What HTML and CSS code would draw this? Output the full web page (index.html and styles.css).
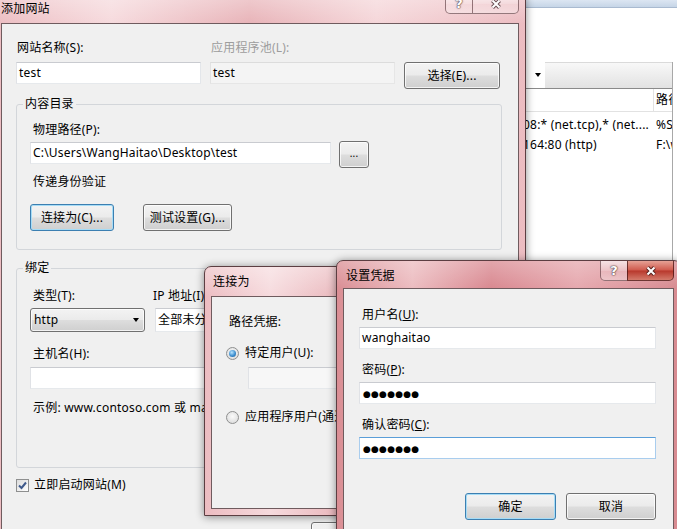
FILE: index.html
```html
<!DOCTYPE html>
<html lang="zh-CN">
<head>
<meta charset="utf-8">
<title>添加网站</title>
<link rel="stylesheet" href="styles.css">
</head>
<body>
<div class="desktop">

  <div class="bgwin">
    <div class="bg-top"></div>
    <div class="bg-pane">
      <div class="bg-toolbar">
        <div class="bg-combo"><span class="tri"></span></div>
        <div class="bg-tools"></div>
      </div>
      <div class="bg-head"><div class="c1"></div><div class="c2">路径</div></div>
      <div class="bg-rows">
        <div class="bg-row"><div class="c1">08:* (net.tcp),* (net....</div><div class="c2">%SystemDrive%\inetpub\wwwroot</div></div>
        <div class="bg-row"><div class="c1">164:80 (http)</div><div class="c2">F:\website</div></div>
      </div>
    </div>
  </div>

  <div class="win win-main inactive">
    <div class="titlebar">
      <span class="title">添加网站</span>
      <div class="caps">
        <span class="cap help">?</span>
        <span class="cap close"><svg width="12" height="10" viewBox="0 0 12 10"><path d="M2.5 1.5 L9.5 8.5 M9.5 1.5 L2.5 8.5" stroke="#6b5255" stroke-width="4"/><path d="M2.5 1.5 L9.5 8.5 M9.5 1.5 L2.5 8.5" stroke="#fff" stroke-width="2"/></svg></span>
      </div>
    </div>
    <div class="client main-client">
      <div class="site-grid">
        <span class="lbl">网站名称(S):</span>
        <span class="lbl disabled">应用程序池(L):</span>
        <span></span>
        <div class="tb">test</div>
        <div class="tb readonly">test</div>
        <button class="btn">选择(E)...</button>
      </div>

      <fieldset class="group g1">
        <legend>内容目录</legend>
        <div class="g1-body">
          <span class="lbl block">物理路径(P):</span>
          <div class="path-row">
            <div class="tb path">C:\Users\WangHaitao\Desktop\test</div>
            <button class="btn dots">...</button>
          </div>
          <span class="lbl block auth">传递身份验证</span>
          <div class="btn-row">
            <button class="btn default w84">连接为(C)...</button>
            <button class="btn w89">测试设置(G)...</button>
          </div>
        </div>
      </fieldset>

      <fieldset class="group g2">
        <legend>绑定</legend>
        <div class="g2-body">
          <div class="bind-grid">
            <span class="lbl">类型(T):</span>
            <span class="lbl ip">IP 地址(I):</span>
            <div class="select"><span>http</span><span class="tri"></span></div>
            <div class="tb ipbox">全部未分配</div>
          </div>
          <span class="lbl block host">主机名(H):</span>
          <div class="tb hostbox"></div>
          <span class="lbl block example">示例: www.contoso.com 或 marketing.contoso.com</span>
        </div>
      </fieldset>

      <div class="check-row">
        <span class="checkbox"><svg width="11" height="11" viewBox="0 0 11 11"><path d="M2 5.5 L4.5 8 L9 2.5" fill="none" stroke="#3f5a8c" stroke-width="2"/></svg></span>
        <span>立即启动网站(M)</span>
      </div>

      <div class="main-actions">
        <button class="btn w85">确定</button>
        <button class="btn w85">取消</button>
      </div>
    </div>
  </div>

  <div class="win win-conn inactive">
    <div class="titlebar">
      <span class="title">连接为</span>
    </div>
    <div class="client conn-client">
      <span class="lbl block">路径凭据:</span>
      <div class="radio-row first">
        <span class="radio checked"></span>
        <span>特定用户(U):</span>
      </div>
      <div class="tb userbox"></div>
      <div class="radio-row second">
        <span class="radio"></span>
        <span>应用程序用户(通过身份验证)(A)</span>
      </div>
    </div>
  </div>

  <div class="win win-cred active">
    <div class="titlebar">
      <span class="title">设置凭据</span>
      <div class="caps">
        <span class="cap help">?</span>
        <span class="cap close red"><svg width="12" height="10" viewBox="0 0 12 10"><path d="M2.5 1.5 L9.5 8.5 M9.5 1.5 L2.5 8.5" stroke="#5a2420" stroke-width="4"/><path d="M2.5 1.5 L9.5 8.5 M9.5 1.5 L2.5 8.5" stroke="#fff" stroke-width="2"/></svg></span>
      </div>
    </div>
    <div class="client cred-client">
      <span class="lbl block">用户名(<u>U</u>):</span>
      <div class="tb cred">wanghaitao</div>
      <span class="lbl block gap">密码(<u>P</u>):</span>
      <div class="tb cred"><span class="pw">●●●●●●●</span></div>
      <span class="lbl block gap">确认密码(<u>C</u>):</span>
      <div class="tb cred focus"><span class="pw">●●●●●●●</span></div>
      <div class="cred-actions">
        <button class="btn default w91">确定</button>
        <button class="btn w90">取消</button>
      </div>
    </div>
  </div>

</div>
</body>
</html>
```

FILE: styles.css
```css
* { box-sizing: border-box; margin: 0; padding: 0; }
html, body { width: 677px; height: 529px; overflow: hidden; }
body {
  font-family: "Noto Sans", "Noto Sans CJK SC", sans-serif;
  font-size: 12px;
  line-height: 16px;
  letter-spacing: 0.2px;
  color: #000;
  background: #fff;
}
.desktop { position: relative; width: 677px; height: 529px; overflow: hidden; }

/* background IIS window */
.bgwin { position: absolute; left: 440px; top: 0; width: 237px; height: 529px; background: #fff; }
.bg-top { height: 8px; background: linear-gradient(#dce6f2, #c6d5e7); border-bottom: 1px solid #a9bad0; }
.bg-pane { margin-top: 54px; width: 233px; height: 467px; border-right: 1px solid #a8a8a8; overflow: hidden; }
.bg-toolbar { display: flex; height: 27px; border-bottom: 1px solid #8a8a8a; }
.bg-combo { width: 105px; background: #fff; display: flex; align-items: center; justify-content: flex-end; padding-right: 4px; }
.bg-tools { flex: 1; background: linear-gradient(#f8f8f8, #e2e2e2); border-top: 1px solid #dadada; }
.tri { width: 0; height: 0; border-left: 3.5px solid transparent; border-right: 3.5px solid transparent; border-top: 4px solid #000; }
.bg-head { display: flex; height: 23px; border-bottom: 1px solid #e2e2e2; line-height: 22px; }
.bg-head .c1 { flex: none; width: 213px; }
.bg-head .c2 { flex: none; border-left: 1px solid #e2e2e2; padding-left: 2px; white-space: nowrap; }
.bg-rows { padding-top: 3px; }
.bg-row { display: flex; height: 20px; line-height: 20px; white-space: nowrap; }
.bg-row .c1 { flex: none; width: 213px; padding-left: 83px; overflow: hidden; }
.bg-row .c2 { flex: none; padding-left: 3px; }

/* windows */
.win {
  position: absolute;
  border: 1px solid #5c3e42;
  border-radius: 7px 7px 0 0;
  padding: 0 6px 6px;
  display: flex;
  flex-direction: column;
  box-shadow: 0 1px 9px rgba(0, 0, 0, 0.45);
}
.win.inactive {
  background:
    linear-gradient(180deg, rgba(255,255,255,0.35), rgba(255,255,255,0) 30px),
    linear-gradient(90deg, #ecbcc1 0%, #f6dadd 22%, #e8b3b8 48%, #f5d6d9 72%, #ecbcc1 100%);
}
.win.active {
  background:
    linear-gradient(180deg, rgba(255,255,255,0.25), rgba(255,255,255,0) 28px),
    linear-gradient(90deg, #da8e94 0%, #ecbcc0 22%, #d98890 45%, #e6a8ae 70%, #d78a90 100%);
}
.titlebar { flex: none; height: 29px; display: flex; justify-content: space-between; align-items: flex-start; }
.title { padding: 7px 0 0 2px; line-height: 16px; white-space: nowrap; }
.caps { display: flex; }
.cap {
  height: 20px; display: flex; align-items: center; justify-content: center;
  border: 1px solid rgba(80, 45, 50, 0.6); border-top: 0;
  background: linear-gradient(rgba(255,255,255,0.6), rgba(255,255,255,0.25) 50%, rgba(255,255,255,0.1) 51%, rgba(255,255,255,0.35));
  color: #fff; font-weight: bold; font-size: 13px; font-family: "DejaVu Sans", sans-serif;
  text-shadow: 0 0 1px #5b4346, 0 0 1px #5b4346, 0 0 2px #5b4346;
}
.cap.help { width: 27px; border-right: 0; border-radius: 0 0 0 5px; }
.cap.close { width: 47px; border-radius: 0 0 5px 0; }
.cap.red { background: linear-gradient(#e6a195, #cf5a4d 48%, #b8382c 52%, #d37a6b); border-color: rgba(70, 20, 20, 0.75); }
.client { flex: 1; background: #f0f0f0; border: 1px solid #6f5b5e; min-height: 0; }

.win-main { left: -6px; top: -7px; width: 532px; height: 560px; }
.win-main .title { padding-left: 0; }
.win-conn { left: 204px; top: 266px; width: 300px; height: 250px; }
.win-cred { left: 336px; top: 260px; width: 345px; height: 290px; }
.win-cred .titlebar { height: 27px; }
.win-cred .title { padding-left: 3px; }

/* controls */
.lbl { line-height: 16px; white-space: nowrap; }
.lbl.block { display: block; padding-left: 3px; }
.lbl.disabled { color: #9d9d9d; }
.tb {
  height: 22px; background: #fff; line-height: 20px; padding-left: 2px; white-space: nowrap; overflow: hidden;
  border: 1px solid; border-color: #c9cbd0 #e3e6ea #e6e9ec #e0e2e6;
}
.tb.readonly { background: #f4f4f4; border-color: #dcdcdc #e6e6e6 #e6e6e6 #e2e2e2; }
.tb.focus { border-color: #5a9ed8 #a9cdee #a9cdee #a9cdee; }
.btn {
  font: inherit; letter-spacing: inherit; color: #000; height: 27px; display: flex; align-items: center; justify-content: center;
  border: 1px solid #707070; border-radius: 3px;
  background: linear-gradient(#f3f3f3 0%, #ebebeb 48%, #dddddd 52%, #cfcfcf 100%);
  box-shadow: inset 0 0 0 1px rgba(255,255,255,0.75);
  white-space: nowrap;
}
.btn.default { border-color: #3c7fb1; box-shadow: inset 0 0 0 1px #a6dcf6; }
.w84 { width: 84px; } .w85 { width: 85px; } .w89 { width: 89px; } .w90 { width: 90px; } .w91 { width: 91px; }

.main-client { padding: 16px 0 0 14px; }
.site-grid { display: grid; grid-template-columns: 185px 185px 96px; column-gap: 9px; row-gap: 6px; align-items: start; }
.site-grid .lbl { padding-left: 1px; }

.group { min-width: 0; width: 486px; border: 1px solid #d3d6da; border-radius: 3px; }
.group legend { margin-left: 6px; padding: 0 2px; line-height: 16px; }
.g1 { margin-top: 7px; }
.g1-body { padding: 10px 0 18px 13px; }
.path-row { display: flex; align-items: flex-start; gap: 8px; margin-top: 4px; }
.tb.path { width: 301px; }
.btn.dots { width: 30px; margin-top: -1px; font-size: 10px; padding-bottom: 3px; }
.lbl.auth { margin-top: 6px; }
.btn-row { display: flex; gap: 29px; margin-top: 14px; }

.g2 { margin-top: 10px; }
.g2-body { padding: 12px 0 51px 13px; }
.bind-grid { display: grid; grid-template-columns: 115px 200px; column-gap: 8px; row-gap: 4px; }
.bind-grid .lbl { padding-left: 3px; }
.bind-grid .lbl.ip { padding-left: 0; }
.select {
  height: 24px; display: flex; align-items: center; justify-content: space-between; padding: 0 5px 0 3px;
  border: 1px solid #707070; border-radius: 3px;
  background: linear-gradient(#f3f3f3 0%, #ebebeb 48%, #dddddd 52%, #cfcfcf 100%);
  box-shadow: inset 0 0 0 1px rgba(255,255,255,0.75);
}
.tb.ipbox { height: 24px; line-height: 22px; margin-left: 2px; }
.lbl.host { margin-top: 14px; }
.tb.hostbox { margin-top: 5px; width: 456px; }
.lbl.example { margin-top: 11px; }

.check-row { display: flex; align-items: center; gap: 5px; margin-top: 9px; height: 16px; }
.checkbox {
  width: 13px; height: 13px; border: 1px solid #8e8f8f; background: linear-gradient(135deg, #dcdcdc, #fff);
  display: flex; align-items: center; justify-content: center;
}
.main-actions { display: flex; gap: 10px; margin-top: 29px; padding-left: 295px; }

/* connect-as */
.conn-client { padding: 17px 0 0 17px; }
.conn-client .lbl.block { padding-left: 0; }
.radio-row { display: flex; align-items: center; gap: 6px; height: 16px; margin-left: -3px; white-space: nowrap; }
.radio-row.first { margin-top: 15px; }
.radio-row.second { margin-top: 20px; }
.radio {
  flex: none; width: 13px; height: 13px; border-radius: 50%; border: 1px solid #8e8f8f;
  background: radial-gradient(circle at 50% 40%, #fafafa, #d6d6d6);
  display: flex; align-items: center; justify-content: center;
}
.radio.checked::after {
  content: ""; width: 7px; height: 7px; border-radius: 50%;
  background: radial-gradient(circle at 40% 35%, #b8e4ff, #3d8fd0 55%, #1b5a92);
}
.tb.userbox { width: 150px; margin: 6px 0 0 19px; background: #f7f7f7; }

/* credentials */
.cred-client { padding: 18px 0 0 15px; }
.tb.cred { width: 297px; margin-top: 4px; }
.lbl.gap { margin-top: 13px; }
.pw { font-family: "DejaVu Sans", sans-serif; font-size: 9px; letter-spacing: 0.2px; padding-left: 1px; }
.cred-actions { width: 297px; display: flex; justify-content: flex-end; gap: 10px; margin-top: 34px; }
```
